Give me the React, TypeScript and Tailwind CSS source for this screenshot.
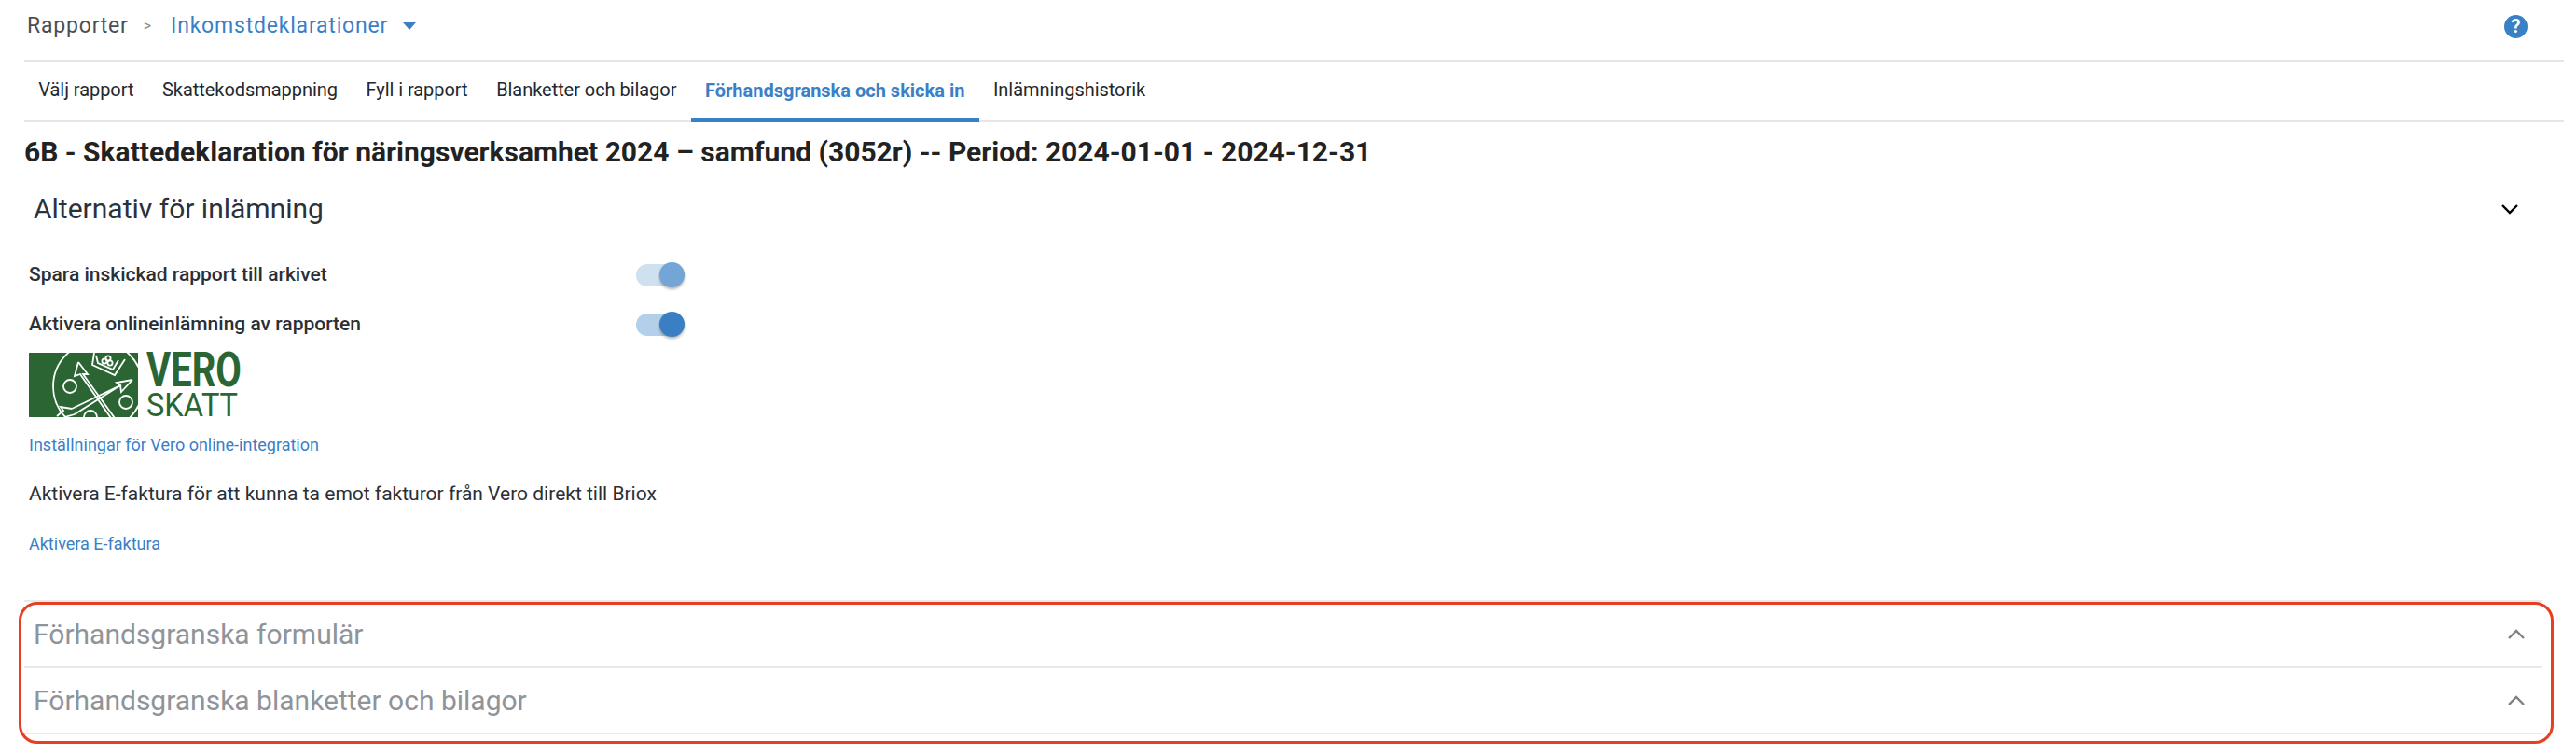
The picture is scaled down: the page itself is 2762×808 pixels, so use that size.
const font = "font-['Roboto',sans-serif]";

function VeroMark() {
  return (
    <svg viewBox="0 0 117 69" className="w-[117px] h-[69px] shrink-0">
      <defs>
        <clipPath id="veroBox">
          <rect width="117" height="69" />
        </clipPath>
      </defs>
      <rect width="117" height="69" fill="#2b6534" />
      <g clipPath="url(#veroBox)" fill="none" stroke="#fff" strokeWidth="1.8">
        <circle cx="74" cy="36" r="48" />
        <circle cx="44" cy="36" r="7" />
        <circle cx="104" cy="53" r="7" />
        <circle cx="66" cy="69" r="7" />
        <path d="M70 0l-2 13 24 11 11-17M72 3l2 8 16 7 6-10" />
        <circle cx="81" cy="9" r="2.6" />
        <circle cx="85" cy="6" r="2.6" />
        <circle cx="87" cy="11" r="2.6" />
        <path d="M53 10l-4 15 6-2 33 47M53 10l10 13-5 0 34 47" />
        <path d="M111 29l-17 3 4 3-52 25M111 29l-12 13-1-7-49 31" />
        <path d="M46 60l-12-2 3 4-7 6M49 66l-11 3" />
      </g>
    </svg>
  );
}

function Toggle({ strong }: { strong: boolean }) {
  return (
    <div className="relative w-[52px] h-[27px] flex items-center">
      <div className={`w-[48px] h-[24px] rounded-full ${strong ? "bg-[#b3cfe9]" : "bg-[#cfe0f1]"}`} />
      <div
        className={`absolute right-0 top-0 w-[27px] h-[27px] rounded-full shadow-[0_2px_3px_rgba(0,0,0,0.3)] ${
          strong ? "bg-[#3a7fc4]" : "bg-[#73a5d7]"
        }`}
      />
    </div>
  );
}

function Chevron({ up, muted }: { up: boolean; muted?: boolean }) {
  return (
    <svg viewBox="0 0 18 11" className="w-[18px] h-[11px]" fill="none" stroke={muted ? "#808080" : "#000"} strokeWidth="2.4">
      <path d={up ? "M1 10l8-8 8 8" : "M1 1l8 8 8-8"} />
    </svg>
  );
}

const tabs = ["Välj rapport", "Skattekodsmappning", "Fyll i rapport", "Blanketter och bilagor"];

export default function App() {
  return (
    <div className={`w-[2762px] h-[808px] overflow-hidden bg-white relative pl-[26px] pr-[13px] ${font}`}>
      {/* Breadcrumb */}
      <header className="h-[66px] border-b-2 border-[#e6e6e6] flex items-center justify-between pb-[8px]">
        <div className="flex items-center pl-[3px]">
          <span className="text-[23px] tracking-[0.8px] text-[#4a4f55]">Rapporter</span>
          <span className="ml-[16px] text-[16px] text-[#8a8a8a]">&gt;</span>
          <span className="ml-[21px] text-[23px] tracking-[0.8px] text-[#3a80c6]">Inkomstdeklarationer</span>
          <span className="ml-[16px] w-0 h-0 border-x-[7px] border-x-transparent border-t-[8px] border-t-[#3a80c6]" />
        </div>
        <div className="mr-[39px] w-[25px] h-[25px] rounded-full bg-[#3a80c6] flex items-center justify-center text-white text-[20px] font-bold">?</div>
      </header>

      {/* Tabs */}
      <nav className="h-[65px] border-b-2 border-[#e6e6e6] flex items-stretch pb-[3px]">
        {tabs.map((t) => (
          <div key={t} className="px-[15.3px] flex items-center text-[20px] tracking-[-0.05px] text-[#24282e] whitespace-nowrap">
            {t}
          </div>
        ))}
        <div className="px-[15.3px] -mb-[5px] border-b-[5px] border-[#3a80c6] flex items-center text-[20px] font-bold text-[#3a80c6] whitespace-nowrap pt-[2px]">
          Förhandsgranska och skicka in
        </div>
        <div className="px-[15.3px] flex items-center text-[20px] tracking-[-0.05px] text-[#24282e]">Inlämningshistorik</div>
      </nav>

      <h1 className="mt-[12px] text-[30px] leading-[40px] font-bold text-[#222222] whitespace-nowrap">
        6B - Skattedeklaration för näringsverksamhet 2024 – samfund (3052r) -- Period: 2024-01-01 - 2024-12-31
      </h1>

      {/* Submission options */}
      <section className="mt-[21px] h-[40px] flex items-center justify-between pl-[10px] pr-[49px]">
        <h2 className="text-[30px] leading-[40px] text-[#2b323a]">Alternativ för inlämning</h2>
        <Chevron up={false} />
      </section>

      <div className="pl-[5px]">
        <div className="mt-[37px] w-[703px] flex items-center justify-between h-[27px]">
          <span className="text-[21px] leading-[27px] font-medium text-[#2b2f36]">Spara inskickad rapport till arkivet</span>
          <Toggle strong={false} />
        </div>
        <div className="mt-[26px] w-[703px] flex items-center justify-between h-[27px]">
          <span className="text-[21px] leading-[27px] font-medium text-[#2b2f36]">Aktivera onlineinlämning av rapporten</span>
          <Toggle strong />
        </div>

        <div className="mt-[17px] flex items-stretch h-[69px] text-[#2b6534]">
          <VeroMark />
          <div className="ml-[9px] flex flex-col">
            <span className="text-[52px] leading-[38px] font-bold origin-left scale-x-[0.77]">VERO</span>
            <span className="mt-[6px] text-[35px] leading-[25px] origin-left scale-x-[0.93]">SKATT</span>
          </div>
        </div>

        <a className="block mt-[19px] text-[18px] leading-[22px] text-[#3a80c6]">Inställningar för Vero online-integration</a>
        <p className="mt-[28px] text-[21px] leading-[26px] text-[#2b2f36]">
          Aktivera E-faktura för att kunna ta emot fakturor från Vero direkt till Briox
        </p>
        <a className="block mt-[30px] text-[18px] leading-[22px] text-[#3a80c6]">Aktivera E-faktura</a>
      </div>

      {/* Collapsed previews */}
      <section className="mt-[49px] mr-[23px] border-t-2 border-[#e8e9eb]">
        <div className="h-[71px] border-b-2 border-[#e8e9eb] flex items-center justify-between pl-[10px] pr-[19px]">
          <h2 className="text-[30px] leading-[40px] text-[#8f9499]">Förhandsgranska formulär</h2>
          <Chevron up muted />
        </div>
        <div className="h-[71px] border-b-2 border-[#e8e9eb] flex items-center justify-between pl-[10px] pr-[19px]">
          <h2 className="text-[30px] leading-[40px] text-[#8f9499]">Förhandsgranska blanketter och bilagor</h2>
          <Chevron up muted />
        </div>
      </section>

      {/* Red annotation */}
      <div className="absolute left-[20px] top-[645px] w-[2718px] h-[152px] rounded-[20px] border-[3px] border-[#e63f22] pointer-events-none" />
    </div>
  );
}
